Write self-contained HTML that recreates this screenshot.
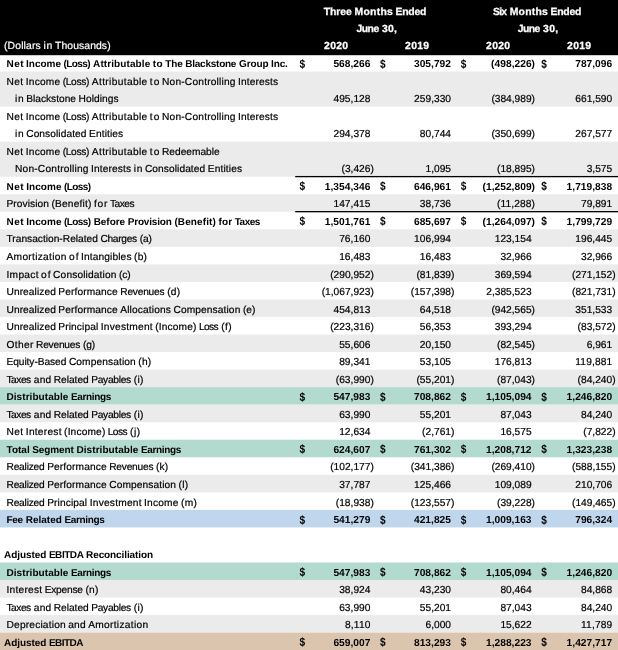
<!DOCTYPE html>
<html lang="en"><head><meta charset="utf-8"><title>Reconciliation of GAAP to Non-GAAP Measures</title>
<style>
html,body{margin:0;padding:0;background:#fff;}
body{width:618px;height:650px;overflow:hidden;}
svg{display:block;will-change:transform;}
text{font-family:"Liberation Sans",sans-serif;fill:#000;text-rendering:geometricPrecision;}
.r{font-size:10.2px;stroke:#000;stroke-width:0.2px;}
.b{font-size:10px;font-weight:bold;}
.nb{font-size:10.2px;font-weight:bold;}
.d{font-size:12px;font-weight:bold;}
.h{font-size:10.4px;font-weight:bold;fill:#fff;stroke:#fff;stroke-width:0.25px;}
.hr{font-size:10.4px;fill:#fff;stroke:#fff;stroke-width:0.2px;}
</style></head><body>
<svg width="618" height="650" viewBox="0 0 618 650">
<rect x="0" y="0" width="618" height="650" fill="#fff"/>
<rect x="0" y="0" width="618" height="55.2" fill="#000"/>
<rect x="0" y="71.50" width="618" height="35.07" fill="#ebebeb"/>
<rect x="0" y="141.64" width="618" height="35.07" fill="#ebebeb"/>
<rect x="0" y="194.25" width="618" height="17.53" fill="#ebebeb"/>
<rect x="0" y="229.31" width="618" height="17.53" fill="#ebebeb"/>
<rect x="0" y="264.38" width="618" height="17.54" fill="#ebebeb"/>
<rect x="0" y="299.46" width="618" height="17.53" fill="#ebebeb"/>
<rect x="0" y="334.52" width="618" height="17.54" fill="#ebebeb"/>
<rect x="0" y="369.60" width="618" height="17.53" fill="#ebebeb"/>
<rect x="0" y="387.13" width="618" height="17.54" fill="#b3dacf"/>
<rect x="0" y="404.67" width="618" height="17.53" fill="#ebebeb"/>
<rect x="0" y="439.74" width="618" height="17.53" fill="#b3dacf"/>
<rect x="0" y="474.81" width="618" height="17.54" fill="#ebebeb"/>
<rect x="0" y="509.88" width="618" height="17.54" fill="#c0d6ed"/>
<rect x="0" y="562.48" width="618" height="17.53" fill="#b3dacf"/>
<rect x="0" y="580.01" width="618" height="17.53" fill="#ebebeb"/>
<rect x="0" y="615.09" width="618" height="17.53" fill="#ebebeb"/>
<rect x="0" y="632.62" width="618" height="17.53" fill="#dcc5ae"/>
<rect x="295.2" y="175.96" width="322.8" height="1.3" fill="#000"/>
<rect x="295.2" y="211.03" width="322.8" height="1.3" fill="#000"/>
<text class="h" y="14.9"><tspan x="323.7" textLength="28.2" lengthAdjust="spacing">Three</tspan> <tspan x="354.6" textLength="38.2" lengthAdjust="spacing">Months</tspan> <tspan x="395.5" textLength="30.8" lengthAdjust="spacing">Ended</tspan></text>
<text class="h" y="32.4"><tspan x="356.6" textLength="22.6" lengthAdjust="spacing">June</tspan> <tspan x="381.9" textLength="15.1" lengthAdjust="spacing">30,</tspan></text>
<text class="h" y="14.9"><tspan x="493.0" textLength="14.0" lengthAdjust="spacing">Six</tspan> <tspan x="509.7" textLength="38.2" lengthAdjust="spacing">Months</tspan> <tspan x="550.5" textLength="30.8" lengthAdjust="spacing">Ended</tspan></text>
<text class="h" y="32.4"><tspan x="517.8" textLength="22.6" lengthAdjust="spacing">June</tspan> <tspan x="543.1" textLength="15.1" lengthAdjust="spacing">30,</tspan></text>
<text class="h" x="324.1" y="49.4" textLength="24.0" lengthAdjust="spacing">2020</text>
<text class="h" x="405.1" y="49.4" textLength="24.0" lengthAdjust="spacing">2019</text>
<text class="h" x="486.1" y="49.4" textLength="24.0" lengthAdjust="spacing">2020</text>
<text class="h" x="567.1" y="49.4" textLength="24.0" lengthAdjust="spacing">2019</text>
<text class="hr" y="49.3"><tspan x="4.0" textLength="36.8" lengthAdjust="spacing">(Dollars</tspan> <tspan x="43.5" textLength="8.9" lengthAdjust="spacing">in</tspan> <tspan x="55.1" textLength="55.5" lengthAdjust="spacing">Thousands)</tspan></text>
<text class="b" y="67.1"><tspan x="6.5" textLength="17.1" lengthAdjust="spacing">Net</tspan> <tspan x="26.1" textLength="34.9" lengthAdjust="spacing">Income</tspan> <tspan x="63.6" textLength="26.9" lengthAdjust="spacing">(Loss)</tspan> <tspan x="93.1" textLength="57.1" lengthAdjust="spacing">Attributable</tspan> <tspan x="152.8" textLength="9.9" lengthAdjust="spacing">to</tspan> <tspan x="165.3" textLength="17.5" lengthAdjust="spacing">The</tspan> <tspan x="185.3" textLength="51.1" lengthAdjust="spacing">Blackstone</tspan> <tspan x="239.0" textLength="29.5" lengthAdjust="spacing">Group</tspan> <tspan x="271.0" textLength="16.9" lengthAdjust="spacing">Inc.</tspan></text>
<text class="nb" x="333.4" y="67.1" textLength="36.9" lengthAdjust="spacing">568,266</text>
<text class="d" transform="translate(299.5,67.6) scale(0.84,1)">$</text>
<text class="nb" x="414.0" y="67.1" textLength="36.9" lengthAdjust="spacing">305,792</text>
<text class="d" transform="translate(380.1,67.6) scale(0.84,1)">$</text>
<text class="nb" x="491.1" y="67.1" textLength="43.9" lengthAdjust="spacing">(498,226)</text>
<text class="d" transform="translate(460.7,67.6) scale(0.84,1)">$</text>
<text class="nb" x="575.2" y="67.1" textLength="36.9" lengthAdjust="spacing">787,096</text>
<text class="d" transform="translate(541.3,67.6) scale(0.84,1)">$</text>
<text class="r" y="84.6"><tspan x="6.5" textLength="16.7" lengthAdjust="spacing">Net</tspan> <tspan x="25.8" textLength="34.3" lengthAdjust="spacing">Income</tspan> <tspan x="62.7" textLength="26.6" lengthAdjust="spacing">(Loss)</tspan> <tspan x="91.8" textLength="55.4" lengthAdjust="spacing">Attributable</tspan> <tspan x="149.8" textLength="9.7" lengthAdjust="spacing">to</tspan> <tspan x="162.0" textLength="73.5" lengthAdjust="spacing">Non-Controlling</tspan> <tspan x="238.0" textLength="40.1" lengthAdjust="spacing">Interests</tspan></text>
<text class="r" y="102.2"><tspan x="15.0" textLength="8.6" lengthAdjust="spacing">in</tspan> <tspan x="26.2" textLength="49.8" lengthAdjust="spacing">Blackstone</tspan> <tspan x="78.5" textLength="40.0" lengthAdjust="spacing">Holdings</tspan></text>
<text class="r" x="333.5" y="102.2" textLength="36.9" lengthAdjust="spacing">495,128</text>
<text class="r" x="414.1" y="102.2" textLength="36.9" lengthAdjust="spacing">259,330</text>
<text class="r" x="491.4" y="102.2" textLength="43.6" lengthAdjust="spacing">(384,989)</text>
<text class="r" x="575.3" y="102.2" textLength="36.9" lengthAdjust="spacing">661,590</text>
<text class="r" y="119.7"><tspan x="6.5" textLength="16.7" lengthAdjust="spacing">Net</tspan> <tspan x="25.8" textLength="34.3" lengthAdjust="spacing">Income</tspan> <tspan x="62.7" textLength="26.6" lengthAdjust="spacing">(Loss)</tspan> <tspan x="91.8" textLength="55.4" lengthAdjust="spacing">Attributable</tspan> <tspan x="149.8" textLength="9.7" lengthAdjust="spacing">to</tspan> <tspan x="162.0" textLength="73.5" lengthAdjust="spacing">Non-Controlling</tspan> <tspan x="238.0" textLength="40.1" lengthAdjust="spacing">Interests</tspan></text>
<text class="r" y="137.2"><tspan x="15.0" textLength="8.6" lengthAdjust="spacing">in</tspan> <tspan x="26.2" textLength="60.3" lengthAdjust="spacing">Consolidated</tspan> <tspan x="89.0" textLength="34.2" lengthAdjust="spacing">Entities</tspan></text>
<text class="r" x="333.5" y="137.2" textLength="36.9" lengthAdjust="spacing">294,378</text>
<text class="r" x="419.8" y="137.2" textLength="31.2" lengthAdjust="spacing">80,744</text>
<text class="r" x="491.4" y="137.2" textLength="43.6" lengthAdjust="spacing">(350,699)</text>
<text class="r" x="575.3" y="137.2" textLength="36.9" lengthAdjust="spacing">267,577</text>
<text class="r" y="154.8"><tspan x="6.5" textLength="16.7" lengthAdjust="spacing">Net</tspan> <tspan x="25.8" textLength="34.3" lengthAdjust="spacing">Income</tspan> <tspan x="62.7" textLength="26.6" lengthAdjust="spacing">(Loss)</tspan> <tspan x="91.8" textLength="55.4" lengthAdjust="spacing">Attributable</tspan> <tspan x="149.8" textLength="9.7" lengthAdjust="spacing">to</tspan> <tspan x="162.0" textLength="57.7" lengthAdjust="spacing">Redeemable</tspan></text>
<text class="r" y="172.3"><tspan x="15.0" textLength="73.5" lengthAdjust="spacing">Non-Controlling</tspan> <tspan x="91.0" textLength="40.1" lengthAdjust="spacing">Interests</tspan> <tspan x="133.7" textLength="8.6" lengthAdjust="spacing">in</tspan> <tspan x="144.9" textLength="60.3" lengthAdjust="spacing">Consolidated</tspan> <tspan x="207.8" textLength="34.2" lengthAdjust="spacing">Entities</tspan></text>
<text class="r" x="341.5" y="172.3" textLength="32.3" lengthAdjust="spacing">(3,426)</text>
<text class="r" x="425.5" y="172.3" textLength="25.5" lengthAdjust="spacing">1,095</text>
<text class="r" x="497.0" y="172.3" textLength="38.0" lengthAdjust="spacing">(18,895)</text>
<text class="r" x="586.7" y="172.3" textLength="25.5" lengthAdjust="spacing">3,575</text>
<text class="b" y="189.8"><tspan x="6.5" textLength="17.2" lengthAdjust="spacing">Net</tspan> <tspan x="26.3" textLength="35.2" lengthAdjust="spacing">Income</tspan> <tspan x="64.0" textLength="27.1" lengthAdjust="spacing">(Loss)</tspan></text>
<text class="nb" x="324.8" y="189.8" textLength="45.5" lengthAdjust="spacing">1,354,346</text>
<text class="d" transform="translate(299.5,190.3) scale(0.84,1)">$</text>
<text class="nb" x="414.0" y="189.8" textLength="36.9" lengthAdjust="spacing">646,961</text>
<text class="d" transform="translate(380.1,190.3) scale(0.84,1)">$</text>
<text class="nb" x="482.5" y="189.8" textLength="52.5" lengthAdjust="spacing">(1,252,809)</text>
<text class="d" transform="translate(460.7,190.3) scale(0.84,1)">$</text>
<text class="nb" x="566.6" y="189.8" textLength="45.5" lengthAdjust="spacing">1,719,838</text>
<text class="d" transform="translate(541.3,190.3) scale(0.84,1)">$</text>
<text class="r" y="207.4"><tspan x="6.5" textLength="42.4" lengthAdjust="spacing">Provision</tspan> <tspan x="51.4" textLength="40.1" lengthAdjust="spacing">(Benefit)</tspan> <tspan x="94.1" textLength="13.2" lengthAdjust="spacing">for</tspan> <tspan x="109.9" textLength="24.7" lengthAdjust="spacing">Taxes</tspan></text>
<text class="r" x="333.5" y="207.4" textLength="36.9" lengthAdjust="spacing">147,415</text>
<text class="r" x="419.8" y="207.4" textLength="31.2" lengthAdjust="spacing">38,736</text>
<text class="r" x="497.0" y="207.4" textLength="38.0" lengthAdjust="spacing">(11,288)</text>
<text class="r" x="581.0" y="207.4" textLength="31.2" lengthAdjust="spacing">79,891</text>
<text class="b" y="224.9"><tspan x="6.5" textLength="17.2" lengthAdjust="spacing">Net</tspan> <tspan x="26.3" textLength="35.2" lengthAdjust="spacing">Income</tspan> <tspan x="64.0" textLength="27.1" lengthAdjust="spacing">(Loss)</tspan> <tspan x="93.7" textLength="31.4" lengthAdjust="spacing">Before</tspan> <tspan x="127.7" textLength="44.1" lengthAdjust="spacing">Provision</tspan> <tspan x="174.4" textLength="41.5" lengthAdjust="spacing">(Benefit)</tspan> <tspan x="218.4" textLength="13.7" lengthAdjust="spacing">for</tspan> <tspan x="234.7" textLength="25.7" lengthAdjust="spacing">Taxes</tspan></text>
<text class="nb" x="324.8" y="224.9" textLength="45.5" lengthAdjust="spacing">1,501,761</text>
<text class="d" transform="translate(299.5,225.4) scale(0.84,1)">$</text>
<text class="nb" x="414.0" y="224.9" textLength="36.9" lengthAdjust="spacing">685,697</text>
<text class="d" transform="translate(380.1,225.4) scale(0.84,1)">$</text>
<text class="nb" x="482.5" y="224.9" textLength="52.5" lengthAdjust="spacing">(1,264,097)</text>
<text class="d" transform="translate(460.7,225.4) scale(0.84,1)">$</text>
<text class="nb" x="566.6" y="224.9" textLength="45.5" lengthAdjust="spacing">1,799,729</text>
<text class="d" transform="translate(541.3,225.4) scale(0.84,1)">$</text>
<text class="r" y="242.4"><tspan x="6.5" textLength="91.4" lengthAdjust="spacing">Transaction-Related</tspan> <tspan x="100.4" textLength="36.7" lengthAdjust="spacing">Charges</tspan> <tspan x="139.7" textLength="12.3" lengthAdjust="spacing">(a)</tspan></text>
<text class="r" x="339.2" y="242.4" textLength="31.2" lengthAdjust="spacing">76,160</text>
<text class="r" x="414.1" y="242.4" textLength="36.9" lengthAdjust="spacing">106,994</text>
<text class="r" x="494.7" y="242.4" textLength="36.9" lengthAdjust="spacing">123,154</text>
<text class="r" x="575.3" y="242.4" textLength="36.9" lengthAdjust="spacing">196,445</text>
<text class="r" y="260.0"><tspan x="6.5" textLength="59.9" lengthAdjust="spacing">Amortization</tspan> <tspan x="69.0" textLength="9.5" lengthAdjust="spacing">of</tspan> <tspan x="81.0" textLength="50.5" lengthAdjust="spacing">Intangibles</tspan> <tspan x="134.1" textLength="12.9" lengthAdjust="spacing">(b)</tspan></text>
<text class="r" x="339.2" y="260.0" textLength="31.2" lengthAdjust="spacing">16,483</text>
<text class="r" x="419.8" y="260.0" textLength="31.2" lengthAdjust="spacing">16,483</text>
<text class="r" x="500.4" y="260.0" textLength="31.2" lengthAdjust="spacing">32,966</text>
<text class="r" x="581.0" y="260.0" textLength="31.2" lengthAdjust="spacing">32,966</text>
<text class="r" y="277.5"><tspan x="6.5" textLength="32.0" lengthAdjust="spacing">Impact</tspan> <tspan x="41.1" textLength="9.5" lengthAdjust="spacing">of</tspan> <tspan x="53.1" textLength="63.3" lengthAdjust="spacing">Consolidation</tspan> <tspan x="119.0" textLength="11.7" lengthAdjust="spacing">(c)</tspan></text>
<text class="r" x="330.2" y="277.5" textLength="43.6" lengthAdjust="spacing">(290,952)</text>
<text class="r" x="416.4" y="277.5" textLength="38.0" lengthAdjust="spacing">(81,839)</text>
<text class="r" x="494.7" y="277.5" textLength="36.9" lengthAdjust="spacing">369,594</text>
<text class="r" x="572.0" y="277.5" textLength="43.6" lengthAdjust="spacing">(271,152)</text>
<text class="r" y="295.1"><tspan x="6.5" textLength="49.3" lengthAdjust="spacing">Unrealized</tspan> <tspan x="58.3" textLength="59.4" lengthAdjust="spacing">Performance</tspan> <tspan x="120.3" textLength="44.3" lengthAdjust="spacing">Revenues</tspan> <tspan x="167.2" textLength="12.9" lengthAdjust="spacing">(d)</tspan></text>
<text class="r" x="321.7" y="295.1" textLength="52.1" lengthAdjust="spacing">(1,067,923)</text>
<text class="r" x="410.8" y="295.1" textLength="43.6" lengthAdjust="spacing">(157,398)</text>
<text class="r" x="486.3" y="295.1" textLength="45.3" lengthAdjust="spacing">2,385,523</text>
<text class="r" x="572.0" y="295.1" textLength="43.6" lengthAdjust="spacing">(821,731)</text>
<text class="r" y="312.6"><tspan x="6.5" textLength="49.3" lengthAdjust="spacing">Unrealized</tspan> <tspan x="58.3" textLength="59.4" lengthAdjust="spacing">Performance</tspan> <tspan x="120.3" textLength="50.6" lengthAdjust="spacing">Allocations</tspan> <tspan x="173.5" textLength="66.8" lengthAdjust="spacing">Compensation</tspan> <tspan x="242.9" textLength="12.6" lengthAdjust="spacing">(e)</tspan></text>
<text class="r" x="333.5" y="312.6" textLength="36.9" lengthAdjust="spacing">454,813</text>
<text class="r" x="419.8" y="312.6" textLength="31.2" lengthAdjust="spacing">64,518</text>
<text class="r" x="491.4" y="312.6" textLength="43.6" lengthAdjust="spacing">(942,565)</text>
<text class="r" x="575.3" y="312.6" textLength="36.9" lengthAdjust="spacing">351,533</text>
<text class="r" y="330.1"><tspan x="6.5" textLength="49.3" lengthAdjust="spacing">Unrealized</tspan> <tspan x="58.3" textLength="39.9" lengthAdjust="spacing">Principal</tspan> <tspan x="100.8" textLength="51.9" lengthAdjust="spacing">Investment</tspan> <tspan x="155.2" textLength="41.2" lengthAdjust="spacing">(Income)</tspan> <tspan x="199.0" textLength="19.7" lengthAdjust="spacing">Loss</tspan> <tspan x="221.2" textLength="10.5" lengthAdjust="spacing">(f)</tspan></text>
<text class="r" x="330.2" y="330.1" textLength="43.6" lengthAdjust="spacing">(223,316)</text>
<text class="r" x="419.8" y="330.1" textLength="31.2" lengthAdjust="spacing">56,353</text>
<text class="r" x="494.7" y="330.1" textLength="36.9" lengthAdjust="spacing">393,294</text>
<text class="r" x="577.6" y="330.1" textLength="38.0" lengthAdjust="spacing">(83,572)</text>
<text class="r" y="347.7"><tspan x="6.5" textLength="26.9" lengthAdjust="spacing">Other</tspan> <tspan x="36.0" textLength="44.3" lengthAdjust="spacing">Revenues</tspan> <tspan x="82.9" textLength="12.3" lengthAdjust="spacing">(g)</tspan></text>
<text class="r" x="339.2" y="347.7" textLength="31.2" lengthAdjust="spacing">55,606</text>
<text class="r" x="419.8" y="347.7" textLength="31.2" lengthAdjust="spacing">20,150</text>
<text class="r" x="497.0" y="347.7" textLength="38.0" lengthAdjust="spacing">(82,545)</text>
<text class="r" x="586.7" y="347.7" textLength="25.5" lengthAdjust="spacing">6,961</text>
<text class="r" y="365.2"><tspan x="6.5" textLength="59.8" lengthAdjust="spacing">Equity-Based</tspan> <tspan x="68.9" textLength="66.8" lengthAdjust="spacing">Compensation</tspan> <tspan x="138.3" textLength="12.9" lengthAdjust="spacing">(h)</tspan></text>
<text class="r" x="339.2" y="365.2" textLength="31.2" lengthAdjust="spacing">89,341</text>
<text class="r" x="419.8" y="365.2" textLength="31.2" lengthAdjust="spacing">53,105</text>
<text class="r" x="494.7" y="365.2" textLength="36.9" lengthAdjust="spacing">176,813</text>
<text class="r" x="575.3" y="365.2" textLength="36.9" lengthAdjust="spacing">119,881</text>
<text class="r" y="382.7"><tspan x="6.5" textLength="24.7" lengthAdjust="spacing">Taxes</tspan> <tspan x="33.8" textLength="17.4" lengthAdjust="spacing">and</tspan> <tspan x="53.8" textLength="34.9" lengthAdjust="spacing">Related</tspan> <tspan x="91.2" textLength="40.0" lengthAdjust="spacing">Payables</tspan> <tspan x="133.8" textLength="9.5" lengthAdjust="spacing">(i)</tspan></text>
<text class="r" x="335.8" y="382.7" textLength="38.0" lengthAdjust="spacing">(63,990)</text>
<text class="r" x="416.4" y="382.7" textLength="38.0" lengthAdjust="spacing">(55,201)</text>
<text class="r" x="497.0" y="382.7" textLength="38.0" lengthAdjust="spacing">(87,043)</text>
<text class="r" x="577.6" y="382.7" textLength="38.0" lengthAdjust="spacing">(84,240)</text>
<text class="b" y="400.3"><tspan x="6.5" textLength="61.8" lengthAdjust="spacing">Distributable</tspan> <tspan x="70.9" textLength="40.3" lengthAdjust="spacing">Earnings</tspan></text>
<text class="nb" x="333.4" y="400.3" textLength="36.9" lengthAdjust="spacing">547,983</text>
<text class="d" transform="translate(299.5,400.8) scale(0.84,1)">$</text>
<text class="nb" x="414.0" y="400.3" textLength="36.9" lengthAdjust="spacing">708,862</text>
<text class="d" transform="translate(380.1,400.8) scale(0.84,1)">$</text>
<text class="nb" x="486.0" y="400.3" textLength="45.5" lengthAdjust="spacing">1,105,094</text>
<text class="d" transform="translate(460.7,400.8) scale(0.84,1)">$</text>
<text class="nb" x="566.6" y="400.3" textLength="45.5" lengthAdjust="spacing">1,246,820</text>
<text class="d" transform="translate(541.3,400.8) scale(0.84,1)">$</text>
<text class="r" y="417.8"><tspan x="6.5" textLength="24.7" lengthAdjust="spacing">Taxes</tspan> <tspan x="33.8" textLength="17.4" lengthAdjust="spacing">and</tspan> <tspan x="53.8" textLength="34.9" lengthAdjust="spacing">Related</tspan> <tspan x="91.2" textLength="40.0" lengthAdjust="spacing">Payables</tspan> <tspan x="133.8" textLength="9.5" lengthAdjust="spacing">(i)</tspan></text>
<text class="r" x="339.2" y="417.8" textLength="31.2" lengthAdjust="spacing">63,990</text>
<text class="r" x="419.8" y="417.8" textLength="31.2" lengthAdjust="spacing">55,201</text>
<text class="r" x="500.4" y="417.8" textLength="31.2" lengthAdjust="spacing">87,043</text>
<text class="r" x="581.0" y="417.8" textLength="31.2" lengthAdjust="spacing">84,240</text>
<text class="r" y="435.3"><tspan x="6.5" textLength="16.7" lengthAdjust="spacing">Net</tspan> <tspan x="25.8" textLength="35.7" lengthAdjust="spacing">Interest</tspan> <tspan x="64.1" textLength="41.2" lengthAdjust="spacing">(Income)</tspan> <tspan x="107.8" textLength="19.7" lengthAdjust="spacing">Loss</tspan> <tspan x="130.1" textLength="10.0" lengthAdjust="spacing">(j)</tspan></text>
<text class="r" x="339.2" y="435.3" textLength="31.2" lengthAdjust="spacing">12,634</text>
<text class="r" x="422.1" y="435.3" textLength="32.3" lengthAdjust="spacing">(2,761)</text>
<text class="r" x="500.4" y="435.3" textLength="31.2" lengthAdjust="spacing">16,575</text>
<text class="r" x="583.3" y="435.3" textLength="32.3" lengthAdjust="spacing">(7,822)</text>
<text class="b" y="452.9"><tspan x="6.5" textLength="23.2" lengthAdjust="spacing">Total</tspan> <tspan x="32.2" textLength="41.7" lengthAdjust="spacing">Segment</tspan> <tspan x="76.5" textLength="61.8" lengthAdjust="spacing">Distributable</tspan> <tspan x="141.0" textLength="40.3" lengthAdjust="spacing">Earnings</tspan></text>
<text class="nb" x="333.4" y="452.9" textLength="36.9" lengthAdjust="spacing">624,607</text>
<text class="d" transform="translate(299.5,453.4) scale(0.84,1)">$</text>
<text class="nb" x="414.0" y="452.9" textLength="36.9" lengthAdjust="spacing">761,302</text>
<text class="d" transform="translate(380.1,453.4) scale(0.84,1)">$</text>
<text class="nb" x="486.0" y="452.9" textLength="45.5" lengthAdjust="spacing">1,208,712</text>
<text class="d" transform="translate(460.7,453.4) scale(0.84,1)">$</text>
<text class="nb" x="566.6" y="452.9" textLength="45.5" lengthAdjust="spacing">1,323,238</text>
<text class="d" transform="translate(541.3,453.4) scale(0.84,1)">$</text>
<text class="r" y="470.4"><tspan x="6.5" textLength="38.2" lengthAdjust="spacing">Realized</tspan> <tspan x="47.2" textLength="59.4" lengthAdjust="spacing">Performance</tspan> <tspan x="109.2" textLength="44.3" lengthAdjust="spacing">Revenues</tspan> <tspan x="156.1" textLength="12.1" lengthAdjust="spacing">(k)</tspan></text>
<text class="r" x="330.2" y="470.4" textLength="43.6" lengthAdjust="spacing">(102,177)</text>
<text class="r" x="410.8" y="470.4" textLength="43.6" lengthAdjust="spacing">(341,386)</text>
<text class="r" x="491.4" y="470.4" textLength="43.6" lengthAdjust="spacing">(269,410)</text>
<text class="r" x="572.0" y="470.4" textLength="43.6" lengthAdjust="spacing">(588,155)</text>
<text class="r" y="487.9"><tspan x="6.5" textLength="38.2" lengthAdjust="spacing">Realized</tspan> <tspan x="47.2" textLength="59.4" lengthAdjust="spacing">Performance</tspan> <tspan x="109.2" textLength="66.8" lengthAdjust="spacing">Compensation</tspan> <tspan x="178.6" textLength="9.5" lengthAdjust="spacing">(l)</tspan></text>
<text class="r" x="339.2" y="487.9" textLength="31.2" lengthAdjust="spacing">37,787</text>
<text class="r" x="414.1" y="487.9" textLength="36.9" lengthAdjust="spacing">125,466</text>
<text class="r" x="494.7" y="487.9" textLength="36.9" lengthAdjust="spacing">109,089</text>
<text class="r" x="575.3" y="487.9" textLength="36.9" lengthAdjust="spacing">210,706</text>
<text class="r" y="505.5"><tspan x="6.5" textLength="38.2" lengthAdjust="spacing">Realized</tspan> <tspan x="47.2" textLength="39.9" lengthAdjust="spacing">Principal</tspan> <tspan x="89.7" textLength="51.9" lengthAdjust="spacing">Investment</tspan> <tspan x="144.1" textLength="34.3" lengthAdjust="spacing">Income</tspan> <tspan x="181.0" textLength="16.0" lengthAdjust="spacing">(m)</tspan></text>
<text class="r" x="335.8" y="505.5" textLength="38.0" lengthAdjust="spacing">(18,938)</text>
<text class="r" x="410.8" y="505.5" textLength="43.6" lengthAdjust="spacing">(123,557)</text>
<text class="r" x="497.0" y="505.5" textLength="38.0" lengthAdjust="spacing">(39,228)</text>
<text class="r" x="572.0" y="505.5" textLength="43.6" lengthAdjust="spacing">(149,465)</text>
<text class="b" y="523.0"><tspan x="6.5" textLength="16.6" lengthAdjust="spacing">Fee</tspan> <tspan x="25.7" textLength="36.1" lengthAdjust="spacing">Related</tspan> <tspan x="64.4" textLength="40.3" lengthAdjust="spacing">Earnings</tspan></text>
<text class="nb" x="333.4" y="523.0" textLength="36.9" lengthAdjust="spacing">541,279</text>
<text class="d" transform="translate(299.5,523.5) scale(0.84,1)">$</text>
<text class="nb" x="414.0" y="523.0" textLength="36.9" lengthAdjust="spacing">421,825</text>
<text class="d" transform="translate(380.1,523.5) scale(0.84,1)">$</text>
<text class="nb" x="486.0" y="523.0" textLength="45.5" lengthAdjust="spacing">1,009,163</text>
<text class="d" transform="translate(460.7,523.5) scale(0.84,1)">$</text>
<text class="nb" x="575.2" y="523.0" textLength="36.9" lengthAdjust="spacing">796,324</text>
<text class="d" transform="translate(541.3,523.5) scale(0.84,1)">$</text>
<text class="b" y="558.1"><tspan x="4.0" textLength="42.3" lengthAdjust="spacing">Adjusted</tspan> <tspan x="48.9" textLength="34.6" lengthAdjust="spacing">EBITDA</tspan> <tspan x="86.1" textLength="66.9" lengthAdjust="spacing">Reconciliation</tspan></text>
<text class="b" y="575.6"><tspan x="6.5" textLength="61.8" lengthAdjust="spacing">Distributable</tspan> <tspan x="70.9" textLength="40.3" lengthAdjust="spacing">Earnings</tspan></text>
<text class="nb" x="333.4" y="575.6" textLength="36.9" lengthAdjust="spacing">547,983</text>
<text class="d" transform="translate(299.5,576.1) scale(0.84,1)">$</text>
<text class="nb" x="414.0" y="575.6" textLength="36.9" lengthAdjust="spacing">708,862</text>
<text class="d" transform="translate(380.1,576.1) scale(0.84,1)">$</text>
<text class="nb" x="486.0" y="575.6" textLength="45.5" lengthAdjust="spacing">1,105,094</text>
<text class="d" transform="translate(460.7,576.1) scale(0.84,1)">$</text>
<text class="nb" x="566.6" y="575.6" textLength="45.5" lengthAdjust="spacing">1,246,820</text>
<text class="d" transform="translate(541.3,576.1) scale(0.84,1)">$</text>
<text class="r" y="593.1"><tspan x="6.5" textLength="35.7" lengthAdjust="spacing">Interest</tspan> <tspan x="44.7" textLength="38.2" lengthAdjust="spacing">Expense</tspan> <tspan x="85.5" textLength="12.9" lengthAdjust="spacing">(n)</tspan></text>
<text class="r" x="339.2" y="593.1" textLength="31.2" lengthAdjust="spacing">38,924</text>
<text class="r" x="419.8" y="593.1" textLength="31.2" lengthAdjust="spacing">43,230</text>
<text class="r" x="500.4" y="593.1" textLength="31.2" lengthAdjust="spacing">80,464</text>
<text class="r" x="581.0" y="593.1" textLength="31.2" lengthAdjust="spacing">84,868</text>
<text class="r" y="610.7"><tspan x="6.5" textLength="24.7" lengthAdjust="spacing">Taxes</tspan> <tspan x="33.8" textLength="17.4" lengthAdjust="spacing">and</tspan> <tspan x="53.8" textLength="34.9" lengthAdjust="spacing">Related</tspan> <tspan x="91.2" textLength="40.0" lengthAdjust="spacing">Payables</tspan> <tspan x="133.8" textLength="9.5" lengthAdjust="spacing">(i)</tspan></text>
<text class="r" x="339.2" y="610.7" textLength="31.2" lengthAdjust="spacing">63,990</text>
<text class="r" x="419.8" y="610.7" textLength="31.2" lengthAdjust="spacing">55,201</text>
<text class="r" x="500.4" y="610.7" textLength="31.2" lengthAdjust="spacing">87,043</text>
<text class="r" x="581.0" y="610.7" textLength="31.2" lengthAdjust="spacing">84,240</text>
<text class="r" y="628.2"><tspan x="6.5" textLength="59.2" lengthAdjust="spacing">Depreciation</tspan> <tspan x="68.2" textLength="17.4" lengthAdjust="spacing">and</tspan> <tspan x="88.2" textLength="59.9" lengthAdjust="spacing">Amortization</tspan></text>
<text class="r" x="344.9" y="628.2" textLength="25.5" lengthAdjust="spacing">8,110</text>
<text class="r" x="425.5" y="628.2" textLength="25.5" lengthAdjust="spacing">6,000</text>
<text class="r" x="500.4" y="628.2" textLength="31.2" lengthAdjust="spacing">15,622</text>
<text class="r" x="581.0" y="628.2" textLength="31.2" lengthAdjust="spacing">11,789</text>
<text class="b" y="645.8"><tspan x="4.0" textLength="42.3" lengthAdjust="spacing">Adjusted</tspan> <tspan x="48.9" textLength="34.6" lengthAdjust="spacing">EBITDA</tspan></text>
<text class="nb" x="333.4" y="645.8" textLength="36.9" lengthAdjust="spacing">659,007</text>
<text class="d" transform="translate(299.5,646.3) scale(0.84,1)">$</text>
<text class="nb" x="414.0" y="645.8" textLength="36.9" lengthAdjust="spacing">813,293</text>
<text class="d" transform="translate(380.1,646.3) scale(0.84,1)">$</text>
<text class="nb" x="486.0" y="645.8" textLength="45.5" lengthAdjust="spacing">1,288,223</text>
<text class="d" transform="translate(460.7,646.3) scale(0.84,1)">$</text>
<text class="nb" x="566.6" y="645.8" textLength="45.5" lengthAdjust="spacing">1,427,717</text>
<text class="d" transform="translate(541.3,646.3) scale(0.84,1)">$</text>
</svg>
</body></html>
